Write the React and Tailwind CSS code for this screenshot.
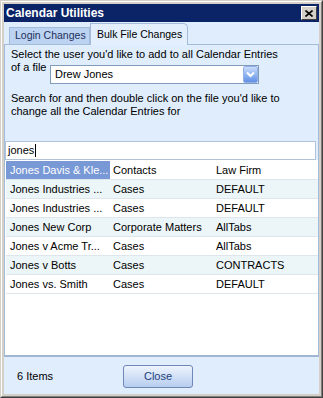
const rows = [
  ["Jones Davis & Kle...", "Contacts", "Law Firm"],
  ["Jones Industries ...", "Cases", "DEFAULT"],
  ["Jones Industries ...", "Cases", "DEFAULT"],
  ["Jones New Corp", "Corporate Matters", "AllTabs"],
  ["Jones v Acme Tr...", "Cases", "AllTabs"],
  ["Jones v Botts", "Cases", "CONTRACTS"],
  ["Jones vs. Smith", "Cases", "DEFAULT"],
];

export default function App() {
  return (
    <div className="w-[323px] h-[398px] border border-t-[#d4d0c8] border-l-[#d4d0c8] border-r-[#404040] border-b-[#404040] font-['Liberation_Sans',Arial,sans-serif] text-[11px] text-black">
      <div className="h-full border border-t-white border-l-white border-r-[#808080] border-b-[#808080] bg-[#d4d0c8] p-[2px] flex flex-col">
        {/* title bar */}
        <div className="h-[18px] shrink-0 bg-[#0b2367] flex items-center justify-between pl-[2px] pr-[2px]">
          <span className="text-white font-bold text-[12px] leading-none">Calendar Utilities</span>
          <button className="w-[16px] h-[14px] bg-[#d4d0c8] border border-t-white border-l-white border-r-[#404040] border-b-[#404040] flex items-center justify-center">
            <svg width="8" height="7" viewBox="0 0 8 7">
              <path d="M0.5 0.5 L7.5 6.5 M7.5 0.5 L0.5 6.5" stroke="#000" strokeWidth="1.6" />
            </svg>
          </button>
        </div>

        {/* body */}
        <div className="flex-1 flex flex-col bg-[#dfedfc]">
          {/* tabs */}
          <div className="h-[22px] shrink-0 flex items-end pl-[5px]">
            <div className="h-[17px] w-[81px] bg-[#bcd3f1] border border-b-0 border-[#a3bcdc] text-[10.5px] text-[#1c2f5e] pl-[5px] flex items-center">
              Login Changes
            </div>
            <div className="h-[22px] w-[98px] -mb-[1px] relative z-10 bg-[#e3effd] border border-b-0 border-[#a3bcdc] rounded-tr-[5px] text-[10.5px] pl-[6px] flex items-center">
              Bulk File Changes
            </div>
          </div>

          {/* panel */}
          <div className="flex-1 flex flex-col border-t border-l border-r border-[#a3bcdc]">
            <div className="h-[96px] shrink-0 pl-[6px] pt-[3px] leading-[13px]">
              <div>Select the user you'd like to add to all Calendar Entries</div>
              <div className="flex items-start">
                <span className="w-[39px] shrink-0">of a file</span>
                <div className="mt-[4px] w-[209px] h-[19px] bg-white border border-[#7f9db9] flex items-center justify-between">
                  <span className="pl-[4px]">Drew Jones</span>
                  <div className="w-[15px] h-[17px] rounded-[2px] border border-[#93b1e8] bg-gradient-to-b from-[#c9dcfc] to-[#5f8fe4] flex items-center justify-center">
                    <svg width="9" height="7" viewBox="0 0 9 7">
                      <path d="M1 1.5 L4.5 5 L8 1.5" fill="none" stroke="#fff" strokeWidth="2" />
                    </svg>
                  </div>
                </div>
              </div>
              <div className="mt-[8px]">Search for and then double click on the file you'd like to</div>
              <div>change all the Calendar Entries for</div>
            </div>

            <div className="h-[19px] shrink-0 mr-[2px] bg-white border border-[#b3c3d7] flex items-center pl-[2px]">
              <span>jones</span>
              <span className="w-px h-[13px] bg-black ml-[1px]" />
            </div>

            <div className="flex-1 bg-white pt-px pl-px">
              {rows.map((r, i) => (
                <div
                  key={i}
                  className={`h-[19px] flex items-center border-b border-[#dde6ec] ${i % 2 === 1 ? "bg-[#ecf5f7]" : "bg-white"}`}
                >
                  <div className={`w-[104px] h-full flex items-center pl-[4px] whitespace-nowrap ${i === 0 ? "bg-[#7898d6] text-white" : ""}`}>
                    {r[0]}
                  </div>
                  <div className="w-[103px] pl-[3px] whitespace-nowrap">{r[1]}</div>
                  <div className="pl-[3px] whitespace-nowrap">{r[2]}</div>
                </div>
              ))}
            </div>
          </div>

          <div className="h-[2px] shrink-0 bg-[#a0b6d4]" />

          {/* bottom bar */}
          <div className="h-[37px] shrink-0 flex items-center pl-[13px] pt-[1px]">
            <span className="w-[106px]">6 Items</span>
            <button className="w-[70px] h-[23px] rounded-[3px] border border-[#6f87b6] bg-gradient-to-b from-[#eef4fd] to-[#b7cdef] text-[#213f7e] text-[11px]">
              Close
            </button>
          </div>
        </div>
      </div>
    </div>
  );
}
